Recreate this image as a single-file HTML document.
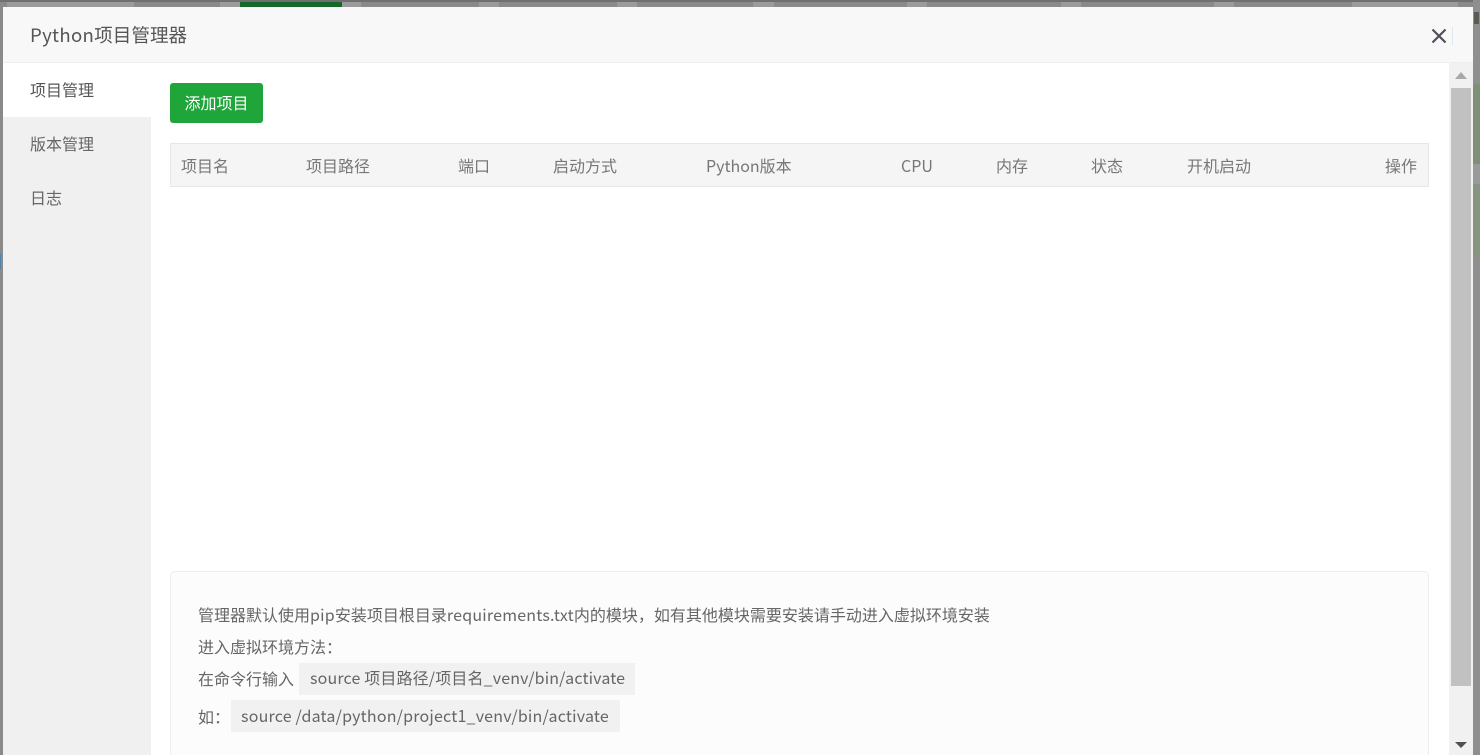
<!DOCTYPE html>
<html lang="zh-CN"><head><meta charset="utf-8"><title>Python项目管理器</title>
<style>
html,body{margin:0;padding:0;width:1480px;height:755px;overflow:hidden;background:#8a8a8a;}
body{position:relative;font-family:"Noto Sans CJK SC","Liberation Sans",sans-serif;color:#666;font-size:16px;}
.a{position:absolute;white-space:nowrap;}
.t{position:absolute;white-space:nowrap;line-height:20px;font-size:16px;}
.h{color:#777;top:155px;}
.n{color:#666;}
.l{letter-spacing:.21px;}
.c{position:absolute;background:#f1f1f1;height:32px;line-height:29px;color:#666;font-size:16px;padding:0 11px;box-sizing:border-box;white-space:nowrap;letter-spacing:.15px;}
.p{position:absolute;top:2px;height:5px;background:#9b9b9b;}
.g{position:absolute;left:1473px;width:7px;}
</style></head>
<body>
<div class="a" style="left:0;top:0;width:1480px;height:2px;background:#707070"></div>
<div class="a" style="left:240px;top:2px;width:102px;height:5px;background:#16692a"></div>
<div class="p" style="left:7px;width:127px"></div>
<div class="p" style="left:220px;width:20px"></div>
<div class="p" style="left:342px;width:19px"></div>
<div class="p" style="left:479px;width:20px"></div>
<div class="p" style="left:617px;width:20px"></div>
<div class="p" style="left:753px;width:21px"></div>
<div class="p" style="left:907px;width:20px"></div>
<div class="p" style="left:1061px;width:20px"></div>
<div class="p" style="left:1214px;width:20px"></div>
<div class="p" style="left:1352px;width:106px"></div>

<div class="g" style="top:0;height:755px;background:#8f8f8f"></div>
<div class="g" style="top:84px;height:80px;background:#7f8f78"></div>
<div class="g" style="top:164px;height:20px;background:#9a9a9a"></div>
<div class="g" style="top:185px;height:72px;background:#87957f"></div>
<div class="a" style="left:0;top:254px;width:1px;height:15px;background:#4f84a8"></div>
<div class="a" style="left:1474px;top:12px;width:5px;height:12px;background:#5c5a52"></div>

<!-- modal -->
<div class="a" style="left:3px;top:7px;width:1470px;height:748px;background:#fff;overflow:hidden">
  <div class="a" style="left:0;top:0;width:1470px;height:55px;background:#f8f8f8;border-bottom:1px solid #eee;box-sizing:content-box"></div>
  <div class="a" style="left:0;top:110px;width:148px;height:638px;background:#f0f0f0"></div>
</div>

<div class="t" style="left:30px;top:25px;font-size:18.6px;color:#555;"><span style="letter-spacing:.3px">Python</span>项目管理器</div>
<svg class="a" style="left:1430px;top:27px" width="18" height="18" viewBox="0 0 18 18"><path d="M2.5 2.5L15.5 15.5M15.5 2.5L2.5 15.5" stroke="#4f4f5a" stroke-width="2.2" fill="none"/></svg>
<div class="a" style="left:1452px;top:27px;width:1px;height:18px;background:#dbe9f4"></div>

<div class="t" style="left:30px;top:79px;color:#555;">项目管理</div>
<div class="t n" style="left:30px;top:133px;">版本管理</div>
<div class="t n" style="left:30px;top:187px;">日志</div>

<div class="a" style="left:170px;top:83px;width:93px;height:40px;background:#20a53a;border-radius:3px;color:#fff;font-size:16px;line-height:38px;text-align:center;">添加项目</div>

<div class="a" style="left:170px;top:143px;width:1259px;height:44px;box-sizing:border-box;background:#f5f5f5;border:1px solid #e6e6e6;"></div>
<div class="t h" style="left:181px;">项目名</div>
<div class="t h" style="left:306px;">项目路径</div>
<div class="t h" style="left:458px;">端口</div>
<div class="t h" style="left:553px;">启动方式</div>
<div class="t h" style="left:706px;">Python版本</div>
<div class="t h" style="left:901px;">CPU</div>
<div class="t h" style="left:996px;">内存</div>
<div class="t h" style="left:1091px;">状态</div>
<div class="t h" style="left:1187px;">开机启动</div>
<div class="t h" style="left:1385px;">操作</div>

<!-- scrollbar -->
<div class="a" style="left:1449px;top:63px;width:24px;height:692px;background:#f1f1f1"></div>
<div class="a" style="left:1451px;top:88px;width:20px;height:598px;background:#c1c1c1"></div>
<div class="a" style="left:1455px;top:72px;width:0;height:0;border-left:6px solid transparent;border-right:6px solid transparent;border-bottom:7px solid #a8a8a8"></div>
<div class="a" style="left:1455px;top:742px;width:0;height:0;border-left:6px solid transparent;border-right:6px solid transparent;border-top:6px solid #505050"></div>

<!-- note box -->
<div class="a" style="left:170px;top:571px;width:1259px;height:200px;box-sizing:border-box;background:#fcfcfc;border:1px solid #eee;border-radius:5px;"></div>
<div class="t n" style="left:198px;top:604px;">管理器默认使用<span class="l">pip</span>安装项目根目录<span class="l">requirements.txt</span>内的模块，如有其他模块需要安装请手动进入虚拟环境安装</div>
<div class="t n" style="left:198px;top:636px;">进入虚拟环境方法：</div>
<div class="t n" style="left:198px;top:668px;">在命令行输入</div>
<div class="c" style="left:299px;top:663px;width:336px;">source 项目路径/项目名_venv/bin/activate</div>
<div class="t n" style="left:198px;top:706px;">如：</div>
<div class="c" style="left:231px;top:700px;width:389px;padding-left:10px;letter-spacing:.2px;line-height:31px;">source /data/python/project1_venv/bin/activate</div>
</body></html>
